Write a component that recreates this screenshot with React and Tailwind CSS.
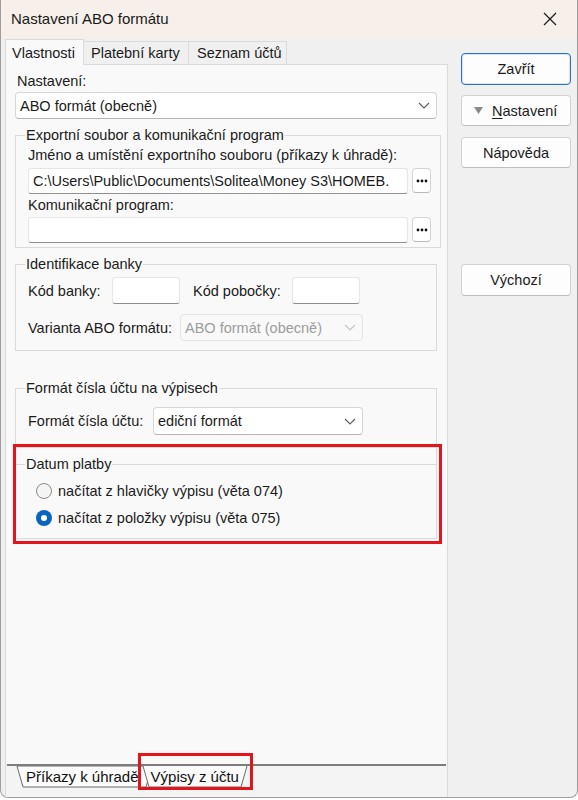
import React from "react";

const FONT = "font-['Liberation_Sans',Arial,sans-serif]";

function Chevron({ color = "#5c5c5c" }) {
  return (
    <svg width="12" height="7" viewBox="0 0 12 7">
      <path d="M1 1l5 5 5-5" fill="none" stroke={color} strokeWidth="1.1" />
    </svg>
  );
}

function Dots() {
  return (
    <svg width="12" height="4" viewBox="0 0 12 4">
      <circle cx="2" cy="2" r="1.4" fill="#111" />
      <circle cx="6" cy="2" r="1.4" fill="#111" />
      <circle cx="10" cy="2" r="1.4" fill="#111" />
    </svg>
  );
}

function Select({ text, w, h = "h-[27px]", disabled = false }) {
  return (
    <div
      className={`${w} ${h} flex items-center justify-between pl-[4px] pr-[6px] rounded-[4px] border ${
        disabled
          ? "bg-[#f9f9f9] border-[#e4e4e4] text-[#9d9d9d]"
          : "bg-white border-[#d6d6d6] border-b-[#b4b4b4] text-[#1b1b1b]"
      }`}
    >
      <span className="whitespace-nowrap">{text}</span>
      <Chevron color={disabled ? "#c4c4c4" : "#5c5c5c"} />
    </div>
  );
}

function TextInput({ w, h = "h-[26px]", text = "" }) {
  return (
    <div
      className={`${w} ${h} bg-white border border-[#e6e6e6] border-b-[#8f8f8f] rounded-[3px] flex items-center pl-[4px] overflow-hidden whitespace-nowrap text-[#1b1b1b]`}
    >
      {text}
    </div>
  );
}

function DotsButton() {
  return (
    <div className="w-[19px] h-[25px] bg-white border border-[#d4d4d4] border-b-[#b8b8b8] rounded-[4px] flex items-center justify-center">
      <Dots />
    </div>
  );
}

function Btn({ children, primary = false, h = "h-[31px]", className = "" }) {
  return (
    <div
      className={`w-[110px] ${h} bg-[#fdfdfd] rounded-[4px] flex items-center justify-center text-[#1b1b1b] ${
        primary ? "border border-[#2a72c4] shadow-[inset_0_0_0_1px_#d5e4f5]" : "border border-[#d2d2d2] border-b-[#bdbdbd]"
      } ${className}`}
    >
      {children}
    </div>
  );
}

function Fieldset({ legend, children, className = "" }) {
  return (
    <fieldset className={`border border-[#dadada] px-[9px] ${className}`}>
      <legend className="px-[1px] leading-[16px] text-[#1b1b1b]">{legend}</legend>
      {children}
    </fieldset>
  );
}

function Radio({ checked, label }) {
  return (
    <div className="flex items-center h-[20px] gap-[6px]">
      {checked ? (
        <span className="w-[16px] h-[16px] rounded-full bg-[#0a64bd] flex items-center justify-center">
          <span className="w-[6px] h-[6px] rounded-full bg-white" />
        </span>
      ) : (
        <span className="w-[16px] h-[16px] rounded-full border border-[#8a8a8a] bg-[#f4f4f4]" />
      )}
      <span className="text-[#1b1b1b]">{label}</span>
    </div>
  );
}

export default function App() {
  return (
    <div className={`w-[578px] h-[800px] bg-white ${FONT} text-[14.5px] leading-[16px]`}>
      <div className="h-[798px] w-full border-x border-b border-[#9e9e9e] rounded-b-[8px] overflow-hidden flex flex-col bg-[#f0f0f0]">
        {/* Title bar */}
        <div className="h-[38px] shrink-0 bg-[#f7efe9] flex items-center justify-between pl-[10px] pr-[20px]">
          <span className="text-[15px] text-[#1a1a1a]">Nastavení ABO formátu</span>
          <svg width="14" height="14" viewBox="0 0 14 14">
            <path d="M1 1l12 12M13 1L1 13" stroke="#1a1a1a" strokeWidth="1.2" />
          </svg>
        </div>

        {/* Body */}
        <div className="flex flex-1 min-h-0">
          {/* Left column */}
          <div className="w-[443px] ml-[4px] flex flex-col">
            {/* Tabs */}
            <div className="h-[25px] mt-[1px] flex items-end shrink-0">
              <div className="w-[79px] h-[26px] -mb-px z-10 bg-[#f9f9f9] border-x border-t border-[#dadada] flex items-center pl-[6px] text-[#1b1b1b]">
                Vlastnosti
              </div>
              <div className="w-[105px] h-[23px] bg-[#f0f0f0] border-t border-r border-[#dadada] flex items-center pl-[7px] text-[#1b1b1b]">
                Platební karty
              </div>
              <div className="w-[98px] h-[23px] bg-[#f0f0f0] border-t border-r border-[#dadada] flex items-center pl-[8px] text-[#1b1b1b]">
                Seznam účtů
              </div>
            </div>

            {/* Panel */}
            <div className="flex-1 flex flex-col border-x border-t border-[#dadada] bg-[#f9f9f9]">
              <div className="flex flex-col pl-[9px] pr-[10px] pt-[8px]">
                <div className="pl-[2px] text-[#1b1b1b]">Nastavení:</div>
                <div className="mt-[3px]">
                  <Select text="ABO formát (obecně)" w="w-full" />
                </div>

                <Fieldset legend="Exportní soubor a komunikační program" className="mt-[8px] pb-[4px]">
                  <div className="pl-[3px] flex flex-col">
                    <div className="mt-[4px] text-[#1b1b1b]">Jméno a umístění exportního souboru (příkazy k úhradě):</div>
                    <div className="mt-[5px] flex items-start gap-[4px]">
                      <TextInput w="w-[380px]" text="C:\Users\Public\Documents\Solitea\Money S3\HOMEB." />
                      <DotsButton />
                    </div>
                    <div className="mt-[3px] text-[#1b1b1b]">Komunikační program:</div>
                    <div className="mt-[4px] flex items-start gap-[4px]">
                      <TextInput w="w-[380px]" />
                      <DotsButton />
                    </div>
                  </div>
                </Fieldset>

                <Fieldset legend="Identifikace banky" className="mt-[8px] pb-[9px]">
                  <div className="pl-[3px] flex flex-col">
                    <div className="mt-[5px] flex items-center">
                      <span className="w-[84px] text-[#1b1b1b]">Kód banky:</span>
                      <TextInput w="w-[68px]" h="h-[27px]" />
                      <span className="ml-[13px] w-[99px] text-[#1b1b1b]">Kód pobočky:</span>
                      <TextInput w="w-[68px]" h="h-[27px]" />
                    </div>
                    <div className="mt-[10px] flex items-center">
                      <span className="w-[152px] text-[#1b1b1b]">Varianta ABO formátu:</span>
                      <Select text="ABO formát (obecně)" w="w-[183px]" disabled />
                    </div>
                  </div>
                </Fieldset>

                <Fieldset legend="Formát čísla účtu na výpisech" className="mt-[29px] pb-[12px]">
                  <div className="pl-[3px] mt-[11px] flex items-center">
                    <span className="w-[125px] text-[#1b1b1b]">Formát čísla účtu:</span>
                    <Select text="ediční formát" w="w-[210px]" h="h-[28px]" />
                  </div>
                </Fieldset>

                <div className="relative border-x border-b border-[#dadada] h-[91px]">
                  <fieldset className="border-t border-[#dadada] pl-[9px] mt-[8px]">
                    <legend className="px-[1px] leading-[16px] text-[#1b1b1b]">Datum platby</legend>
                    <div className="pl-[11px] mt-[9px] flex flex-col gap-[7px]">
                      <Radio label="načítat z hlavičky výpisu (věta 074)" />
                      <Radio checked label="načítat z položky výpisu (věta 075)" />
                    </div>
                  </fieldset>
                  <div className="absolute -top-[4px] -left-[3px] -right-[6px] -bottom-[6px] border-[3px] border-[#e3141b] pointer-events-none" />
                </div>
              </div>

              <div className="flex-1" />

              {/* Bottom sheet tabs */}
              <div className="relative h-[33px] shrink-0 bg-[#f4f4f4]">
                <div className="h-[2px] mx-[1px] bg-[#7d7d7d]" />
                <svg className="absolute left-0 top-[2px]" width="441" height="24" viewBox="0 0 441 24">
                  <polygon points="11,0 17,21 140,21 146,0" fill="#fcfcfc" stroke="#6b6b6b" strokeWidth="1" />
                  <polygon points="137,0 143,21 235,21 241,0" fill="#fafafa" stroke="none" />
                  <polyline points="137,0 143,21 235,21 241,0" fill="none" stroke="#6b6b6b" strokeWidth="1" />
                </svg>
                <div className="relative flex h-[22px] items-center text-[15px] text-[#111]">
                  <span className="ml-[20px] whitespace-nowrap">Příkazy k úhradě</span>
                  <span className="ml-[12px] whitespace-nowrap">Výpisy z účtu</span>
                </div>
                <div className="absolute left-[132px] -top-[11px] w-[115px] h-[37px] border-[3px] border-[#e3141b]" />
              </div>
            </div>
          </div>

          {/* Right column */}
          <div className="flex flex-col pl-[13px] pt-[15px]">
            <Btn primary h="h-[32px]">Zavřít</Btn>
            <Btn className="mt-[10px] !justify-start pl-[12px] gap-[9px]">
              <svg width="9" height="7" viewBox="0 0 9 7">
                <path d="M0 0h9L4.5 7z" fill="#8a8a8a" />
              </svg>
              <span>
                <span className="underline underline-offset-2">N</span>astavení
              </span>
            </Btn>
            <Btn className="mt-[11px]">Nápověda</Btn>
            <Btn className="mt-[96px]" h="h-[32px]">Výchozí</Btn>
          </div>
        </div>
      </div>
    </div>
  );
}
